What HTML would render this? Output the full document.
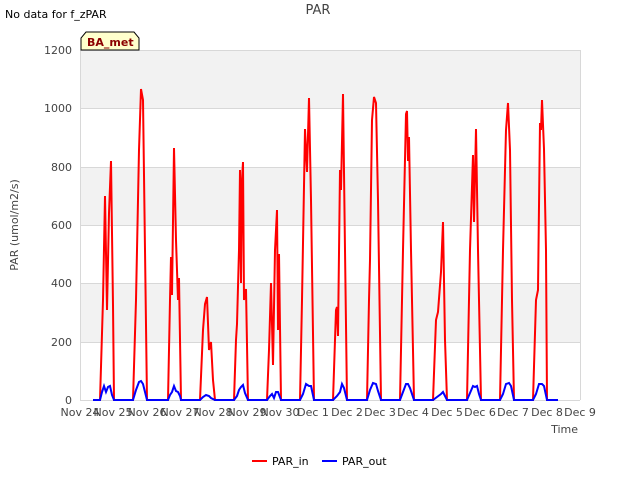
<!DOCTYPE html>
<html><head><meta charset="utf-8"><style>
body{margin:0;background:#fff;font-family:"DejaVu Sans","Liberation Sans",sans-serif;}
</style></head><body>
<svg width="640" height="480" xmlns="http://www.w3.org/2000/svg" font-family="DejaVu Sans, Liberation Sans, sans-serif">
<rect width="640" height="480" fill="#fff"/>
<text x="5" y="18" font-size="11" fill="#000">No data for f_zPAR</text>
<text x="318" y="14" font-size="13" fill="#444" text-anchor="middle">PAR</text>
<rect x="80" y="50" width="500" height="350" fill="#fff"/>
<rect x="80" y="50" width="500" height="58" fill="#f2f2f2"/>
<rect x="80" y="167" width="500" height="58" fill="#f2f2f2"/>
<rect x="80" y="283" width="500" height="59" fill="#f2f2f2"/>
<g stroke="#d8d8d8" stroke-width="1">
<line x1="80" y1="50.5" x2="580" y2="50.5"/><line x1="80" y1="108.5" x2="580" y2="108.5"/>
<line x1="80" y1="167.5" x2="580" y2="167.5"/><line x1="80" y1="225.5" x2="580" y2="225.5"/>
<line x1="80" y1="283.5" x2="580" y2="283.5"/><line x1="80" y1="342.5" x2="580" y2="342.5"/>
<line x1="80.5" y1="50" x2="80.5" y2="400"/><line x1="580.5" y1="50" x2="580.5" y2="400"/>
<line x1="80" y1="400.5" x2="580" y2="400.5"/>
</g>
<g font-size="11" fill="#444" text-anchor="end">
<text x="72" y="404">0</text><text x="72" y="346">200</text><text x="72" y="287">400</text>
<text x="72" y="229">600</text><text x="72" y="171">800</text><text x="72" y="112">1000</text><text x="72" y="54">1200</text>
</g>
<g font-size="11" fill="#444" text-anchor="middle">
<text x="80" y="416">Nov 24</text><text x="113" y="416">Nov 25</text><text x="147" y="416">Nov 26</text>
<text x="180" y="416">Nov 27</text><text x="213" y="416">Nov 28</text><text x="247" y="416">Nov 29</text>
<text x="280" y="416">Nov 30</text><text x="313" y="416">Dec 1</text><text x="347" y="416">Dec 2</text>
<text x="380" y="416">Dec 3</text><text x="413" y="416">Dec 4</text><text x="447" y="416">Dec 5</text>
<text x="480" y="416">Dec 6</text><text x="513" y="416">Dec 7</text><text x="547" y="416">Dec 8</text>
<text x="580" y="416">Dec 9</text>
</g>
<text x="578" y="433" font-size="11" fill="#444" text-anchor="end">Time</text>
<text x="18" y="225" font-size="11" fill="#444" text-anchor="middle" transform="rotate(-90 18 225)">PAR (umol/m2/s)</text>
<polyline fill="none" stroke="#ff0000" stroke-width="2" points="
93,400 100,400 103,300 105,196 107,310 109,213 111,161 113,305 114,400 133,400 136,300 139,150 141,89 143,100 145,250 147,400
168,400 170,300 171,257 172,295 174,148 176,240 178,300 179,278 181,400 200,400 203,330 205,304 207,297 209,350 211,342 213,380 215,400
234,400 236,340 237,324 239,250 240,170 241,283 242,180 243,162 244,300 246,289 248,400 267,400 269,350 271,283 273,365 275,250 277,210 278,330 279,254 281,400
300,400 302,300 305,129 307,172 309,98 311,200 314,400 333,400 336,310 337,307 338,336 340,170 341,190 343,94 345,250 347,400
367,400 369,300 370,260 372,120 374,97 376,103 378,200 381,400 400,400 403,250 406,114 407,111 408,161 409,137 411,250 414,400
433,400 436,320 438,312 441,272 443,222 445,340 447,400 467,400 470,250 473,155 474,222 476,129 478,250 481,400
500,400 503,250 506,130 508,103 510,150 512,300 514,400 533,400 536,300 538,290 540,123 541,130 542,100 544,149 546,250 547,400 558,400"/>
<polyline fill="none" stroke="#0000ff" stroke-width="2" points="
93,400 100,400 102,392 104,386 106,392 108,387 110,386 112,395 114,400 133,400 136,390 139,382 141,381 143,384 145,392 147,400
168,400 170,395 172,392 174,386 176,391 178,392 180,396 181,400 200,400 203,397 206,395 209,396 211,398 215,400
234,400 237,396 239,390 241,387 243,385 245,393 248,400 267,400 270,396 272,394 274,398 276,392 278,392 281,400
300,400 303,394 306,384 309,386 311,386 314,400 333,400 337,396 340,392 342,384 344,388 347,400
367,400 370,390 373,383 376,384 378,391 381,400 400,400 403,392 406,384 408,384 410,388 414,400
433,400 437,397 441,394 443,392 445,396 447,400 467,400 470,393 473,386 475,387 477,386 479,394 481,400
500,400 503,394 506,384 509,383 511,386 514,400 533,400 536,394 539,384 542,384 544,386 547,400 558,400"/>
<path d="M81,50 L81,38 L86,32 L134,32 L139,38 L139,50 Z" fill="#ffffcc" stroke="#000" stroke-width="1"/>
<text x="87" y="46" font-size="11" font-weight="bold" fill="#8b0000">BA_met</text>
<line x1="252" y1="461" x2="267" y2="461" stroke="#ff0000" stroke-width="2"/>
<text x="272" y="465" font-size="11" fill="#000">PAR_in</text>
<line x1="322" y1="461" x2="337" y2="461" stroke="#0000ff" stroke-width="2"/>
<text x="342" y="465" font-size="11" fill="#000">PAR_out</text>
</svg>
</body></html>
